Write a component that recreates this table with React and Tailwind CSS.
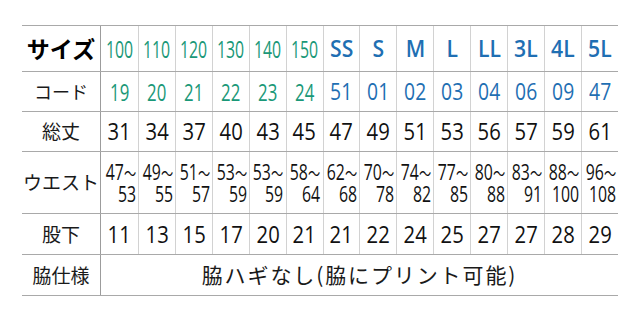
const kids = ["100", "110", "120", "130", "140", "150"];
const adults = ["SS", "S", "M", "L", "LL", "3L", "4L", "5L"];
const codes = ["19", "20", "21", "22", "23", "24", "51", "01", "02", "03", "04", "06", "09", "47"];
const lengths = ["31", "34", "37", "40", "43", "45", "47", "49", "51", "53", "56", "57", "59", "61"];
const waists = [
  ["47", "53"], ["49", "55"], ["51", "57"], ["53", "59"], ["53", "59"], ["58", "64"], ["62", "68"],
  ["70", "78"], ["74", "82"], ["77", "85"], ["80", "88"], ["83", "91"], ["88", "100"], ["96", "108"],
];
const inseams = ["11", "13", "15", "17", "20", "21", "21", "22", "24", "25", "27", "27", "28", "29"];

const rowCls = "grid grid-cols-[79px_repeat(14,minmax(0,1fr))] border-b border-[#a9a9a9]";

function Label({ children, className = "" }) {
  return (
    <div className={"flex items-center justify-center border-r border-[#9c9c9c] text-[#1a1a1a] font-['Noto_Sans_CJK_JP',sans-serif] " + className}>
      {children}
    </div>
  );
}

function Cell({ children, first }) {
  return (
    <div className={"flex min-w-0 items-center justify-center whitespace-nowrap " + (first ? "" : "border-l border-[#d2d2d2]")}>
      {children}
    </div>
  );
}

export default function App() {
  return (
    <div className="w-[640px] h-[320px] bg-white px-[22px] pt-[25px] font-['Open_Sans','Noto_Sans_CJK_JP',sans-serif]">
      <div className="border-t border-[#a9a9a9]">
        <div className={rowCls + " h-[46px]"}>
          <Label className="text-[23px] font-bold text-black">サイズ</Label>
          {kids.map((k, i) => (
            <Cell key={k} first={i === 0}>
              <span className="inline-block text-[24px] text-[#1a9878] scale-x-[0.66]">{k}</span>
            </Cell>
          ))}
          {adults.map((a) => (
            <Cell key={a}>
              <span className="inline-block text-[23px] font-semibold text-[#1f6fb3] scale-x-[0.92]">{a}</span>
            </Cell>
          ))}
        </div>

        <div className={rowCls + " h-[40px]"}>
          <Label className="text-[18px]">コード</Label>
          {codes.map((c, i) => (
            <Cell key={i} first={i === 0}>
              <span
                className={
                  i < 6
                    ? "inline-block text-[24px] text-[#1a9878] scale-x-[0.7]"
                    : "inline-block text-[23px] text-[#1f6fb3] scale-x-[0.84]"
                }
              >
                {c}
              </span>
            </Cell>
          ))}
        </div>

        <div className={rowCls + " h-[40px]"}>
          <Label className="text-[19px]">総丈</Label>
          {lengths.map((n, i) => (
            <Cell key={i} first={i === 0}>
              <span className="inline-block text-[23px] text-[#111] scale-x-[0.88]">{n}</span>
            </Cell>
          ))}
        </div>

        <div className={rowCls + " h-[62px]"}>
          <Label className="text-[19px]">ウエスト</Label>
          {waists.map(([a, b], i) => (
            <div key={i} className={"flex min-w-0 items-center justify-end pr-[2px] whitespace-nowrap " + (i === 0 ? "" : "border-l border-[#d2d2d2]")}>
              <div className="inline-block origin-right scale-x-[0.72] text-right text-[22px] leading-[21px] text-[#111]">
                <div>
                  {a}
                  <span className="font-['Noto_Sans_CJK_JP',sans-serif] text-[17px]">～</span>
                </div>
                <div>{b}</div>
              </div>
            </div>
          ))}
        </div>

        <div className={rowCls + " h-[41px]"}>
          <Label className="text-[19px]">股下</Label>
          {inseams.map((n, i) => (
            <Cell key={i} first={i === 0}>
              <span className="inline-block text-[23px] text-[#111] scale-x-[0.88]">{n}</span>
            </Cell>
          ))}
        </div>

        <div className={rowCls + " h-[41px]"}>
          <Label className="text-[19px]">脇仕様</Label>
          <div className="col-span-14 flex items-center justify-center text-[21px] tracking-[0.09em] text-[#1a1a1a] font-['Noto_Sans_CJK_JP',sans-serif]">
            脇ハギなし(脇にプリント可能)
          </div>
        </div>
      </div>
    </div>
  );
}
